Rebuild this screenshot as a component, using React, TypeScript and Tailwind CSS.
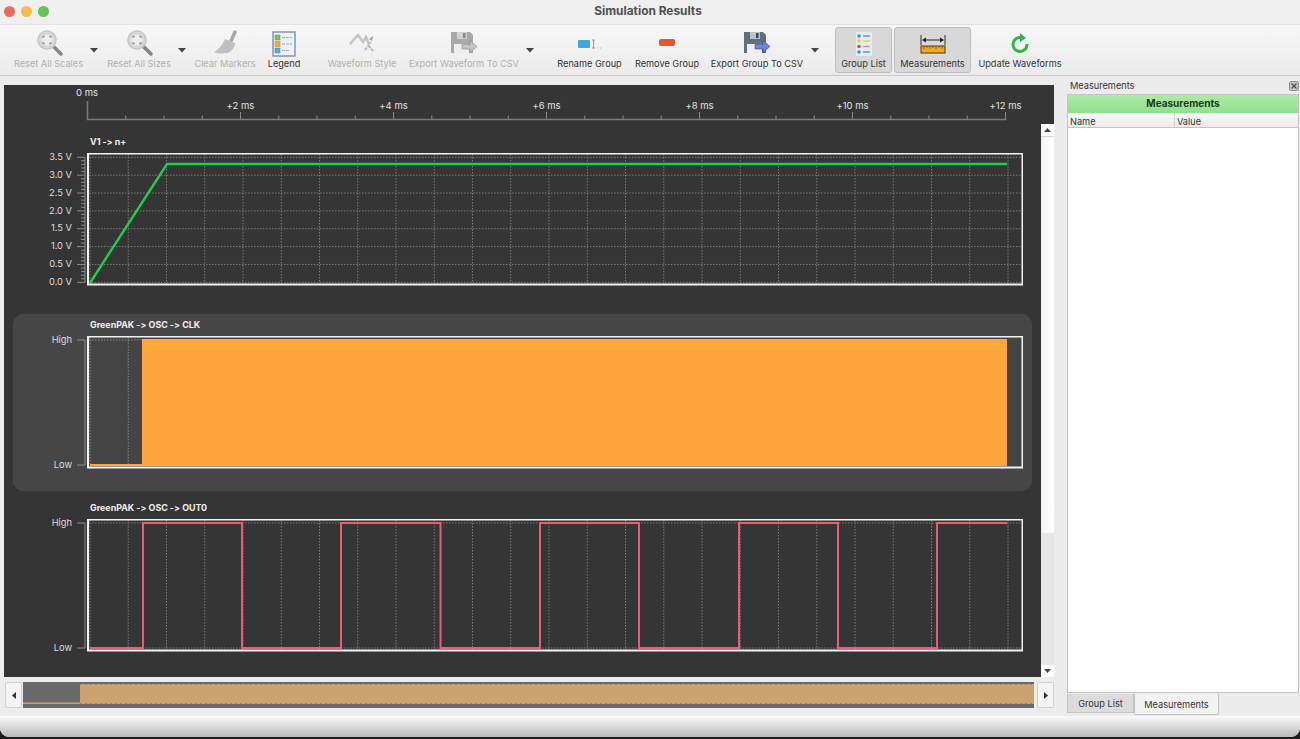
import type { ReactNode } from 'react';

const cols = Array.from({ length: 25 }, (_, i) => 90 + i * 38.25);

function Magnifier() {
  return (
    <svg width="30" height="28" viewBox="0 0 30 28">
      <line x1="20" y1="17" x2="27" y2="24" stroke="#858585" strokeWidth="3.5" strokeLinecap="round" />
      <circle cx="13" cy="10" r="9" fill="#d8d8d8" stroke="#c6c6c6" strokeWidth="1.5" />
      <circle cx="13" cy="10" r="5.5" fill="#ededed" />
      <path d="M9 8V6.5H11M15 6.5H17V8M17 12V13.5H15M11 13.5H9V12" fill="none" stroke="#a2a2a2" strokeWidth="1.5" />
    </svg>
  );
}

function Broom() {
  return (
    <svg width="30" height="28" viewBox="0 0 30 28">
      <path d="M25 2L21 11" stroke="#a9a9a9" strokeWidth="3.5" strokeLinecap="round" />
      <path d="M15 9L25 13C24 19 20 24 15 23C10 24 6 23 4 22C9 20 12 15 15 9Z" fill="#c0c0c0" />
    </svg>
  );
}

function LegendIcon() {
  return (
    <svg width="26" height="26" viewBox="0 0 26 26">
      <rect x="2" y="1" width="22" height="24" fill="#eef1f4" stroke="#8296ad" strokeWidth="1.5" />
      <rect x="4" y="4" width="5" height="5" fill="#82bd62" stroke="#5a9440" strokeWidth="0.5" />
      <rect x="4" y="10.5" width="5" height="5" fill="#f5a93c" stroke="#c9801a" strokeWidth="0.5" />
      <rect x="4" y="17" width="5" height="5" fill="#58aee2" stroke="#2e84ba" strokeWidth="0.5" />
      <path d="M11 6.5H21M11 13H21M11 19.5H18" stroke="#8c98a5" strokeWidth="0.8" strokeDasharray="3 1" />
    </svg>
  );
}

function WaveIcon() {
  return (
    <svg width="30" height="28" viewBox="0 0 30 28">
      <path d="M3 14L11 5L16 12L19 7L22 14" fill="none" stroke="#c4c4c4" strokeWidth="2.5" />
      <path d="M18 20L24 12M26 21L21 15" stroke="#bcbcbc" strokeWidth="2" strokeDasharray="3 1" />
      <path d="M22 9L26 6L25 11Z" fill="#9c9c9c" />
    </svg>
  );
}

function Floppy({ body, dark, shutter, arrow }: { body: string; dark: string; shutter: string; arrow: string }) {
  return (
    <svg width="30" height="28" viewBox="0 0 30 28">
      <path d="M2 2H21L24 5V23H2Z" fill={body} />
      <rect x="8" y="2" width="10" height="7" fill={shutter} />
      <rect x="14" y="3" width="2.5" height="5" fill={dark} />
      <rect x="5" y="14" width="15" height="9" fill="#eeeeee" />
      <path d="M13 14.5H21V10.5L28 16.5L21 22.5V19H13Z" fill={arrow} stroke={dark} strokeWidth="0.6" />
    </svg>
  );
}

function RenameIcon() {
  return (
    <svg width="30" height="28" viewBox="0 0 30 28">
      <rect x="3" y="10" width="12" height="8" rx="1" fill="#3ea7e2" />
      <path d="M17 10H20M17 18H20M18.5 10V18" stroke="#9a9a9a" strokeWidth="1" fill="none" />
      <path d="M22 18H23M25 18H26" stroke="#b5b5b5" strokeWidth="1" />
    </svg>
  );
}

function RemoveIcon() {
  return (
    <svg width="30" height="28" viewBox="0 0 30 28">
      <rect x="7" y="9" width="16" height="7" rx="2" fill="#e0582b" />
    </svg>
  );
}

function GroupListIcon() {
  return (
    <svg width="30" height="28" viewBox="0 0 30 28">
      <rect x="7" y="2" width="16" height="24" fill="#e6ecf0" />
      <circle cx="10" cy="6" r="1.8" fill="#2a9bd8" />
      <circle cx="10" cy="11" r="1.8" fill="#f4c63c" />
      <circle cx="10" cy="16.5" r="1.8" fill="#e0483c" />
      <circle cx="10" cy="22" r="1.8" fill="#2a9bd8" />
      <path d="M14 6H21" stroke="#2a9bd8" strokeWidth="1.3" />
      <path d="M14 11H21" stroke="#f4c63c" strokeWidth="1.3" />
      <path d="M14 16.5H21" stroke="#e58a80" strokeWidth="1.3" />
      <path d="M14 22H21" stroke="#2a9bd8" strokeWidth="1.3" />
    </svg>
  );
}

function RulerIcon() {
  return (
    <svg width="30" height="28" viewBox="0 0 30 28">
      <path d="M3 5V15M27 5V15" stroke="#333" strokeWidth="1" />
      <path d="M5 10H25" stroke="#222" strokeWidth="1" />
      <path d="M4 10L8 7.5V12.5ZM26 10L22 7.5V12.5Z" fill="#222" />
      <rect x="3" y="16" width="24" height="7" fill="#f2a81d" stroke="#4a3a18" strokeWidth="1" />
      <path d="M6 16V19M9 16V18M12 16V19M15 16V18M18 16V19M21 16V18M24 16V19" stroke="#6b4e10" strokeWidth="0.75" />
    </svg>
  );
}

function RefreshIcon() {
  return (
    <svg width="30" height="28" viewBox="0 0 30 28">
      <path d="M16 7.5A7 7 0 1 0 22 14" fill="none" stroke="#35b44c" strokeWidth="3" />
      <path d="M15 3L21 8L15 12Z" fill="#35b44c" />
    </svg>
  );
}

function ToolButton({ label, icon, width, disabled, checked }: { label: string; icon: ReactNode; width: string; disabled?: boolean; checked?: boolean }) {
  return (
    <div className={`${width} shrink-0 flex flex-col items-center ${checked ? 'h-[46px] mt-[2px] pt-[2px] bg-[#d8d8d8] border border-[#bdbdbd] rounded-[3px]' : 'h-[50px] pt-[5px]'}`}>
      <div className="h-[28px] flex items-center justify-center">{icon}</div>
      <span className={`whitespace-nowrap leading-[12px] text-[9.2px] ${disabled ? 'text-[#b0b0b0]' : 'text-[#333333]'}`}>{label}</span>
    </div>
  );
}

function Arrow({ width, color = '#444444' }: { width: string; color?: string }) {
  return (
    <div className={`${width} shrink-0 h-[50px] flex justify-center pt-[23px]`}>
      <svg width="8" height="5" viewBox="0 0 8 5"><path d="M0 0H8L4 4.5Z" fill={color} /></svg>
    </div>
  );
}

function Grip({ width }: { width: string }) {
  return (
    <div className={`${width} shrink-0 h-[50px] flex items-center justify-center`}>
      <div className="w-[4px] h-[15px] mt-[-2px] bg-[radial-gradient(#c2c2c2_0.6px,transparent_0.7px)] bg-[length:2px_2px]" />
    </div>
  );
}

function Toolbar() {
  return (
    <div className="h-[51px] flex border-b border-[#c9c9c9] bg-gradient-to-b from-[#f7f7f7] to-[#ebebeb]">
      <Grip width="w-[10px]" />
      <ToolButton disabled width="w-[77px]" label="Reset All Scales" icon={<Magnifier />} />
      <Arrow width="w-[14px]" />
      <ToolButton disabled width="w-[76px]" label="Reset All Sizes" icon={<Magnifier />} />
      <Arrow width="w-[10px]" />
      <ToolButton disabled width="w-[76px]" label="Clear Markers" icon={<Broom />} />
      <ToolButton width="w-[42px]" label="Legend" icon={<LegendIcon />} />
      <Grip width="w-[20px]" />
      <ToolButton disabled width="w-[74px]" label="Waveform Style" icon={<WaveIcon />} />
      <div className="w-[3px] shrink-0" />
      <ToolButton disabled width="w-[124px]" label="Export Waveform To CSV" icon={<Floppy body="#a9a9a9" dark="#8a8a8a" shutter="#d0d0d0" arrow="#c4c4c4" />} />
      <Arrow width="w-[8px]" />
      <Grip width="w-[22px]" />
      <ToolButton width="w-[67px]" label="Rename Group" icon={<RenameIcon />} />
      <ToolButton width="w-[88px]" label="Remove Group" icon={<RemoveIcon />} />
      <ToolButton width="w-[92px]" label="Export Group To CSV" icon={<Floppy body="#5c7082" dark="#3a4a58" shutter="#b8c2ca" arrow="#6f80ea" />} />
      <Arrow width="w-[24px]" />
      <Grip width="w-[8px]" />
      <ToolButton checked width="w-[57px]" label="Group List" icon={<GroupListIcon />} />
      <div className="w-[2px] shrink-0" />
      <ToolButton checked width="w-[77px]" label="Measurements" icon={<RulerIcon />} />
      <ToolButton width="w-[98px]" label="Update Waveforms" icon={<RefreshIcon />} />
    </div>
  );
}

function Ruler() {
  const labels = [2, 4, 6, 8, 10, 12];
  return (
    <svg width="1050" height="39" viewBox="4 85 1050 39" className="block shrink-0">
      <text x="87" y="96" textAnchor="middle" fontSize="9.5" fill="#e2e2e2">0 ms</text>
      {labels.map((n) => (
        <text key={n} x={87.5 + n * 76.5} y="108.5" textAnchor="middle" fontSize="9.5" fill="#e2e2e2">+{n} ms</text>
      ))}
      <path d="M87.5 101V119.5H1006.5" fill="none" stroke="#7b7b7b" strokeWidth="1.5" />
      {Array.from({ length: 24 }, (_, i) => {
        const major = (i + 1) % 4 === 0;
        const x = 87.5 + (i + 1) * 38.25;
        return <line key={i} x1={x} x2={x} y1={major ? 112 : 115.5} y2="119" stroke="#8a8a8a" strokeWidth="1" />;
      })}
    </svg>
  );
}

function Plot({ top, ticks, minor, children }: { top: number; ticks: number[]; minor?: number[]; children: ReactNode }) {
  return (
    <svg width="951" height="133" viewBox={`72 ${top} 951 133`} className="block">
      <path d={`M85 ${ticks[0]}V${ticks[ticks.length - 1]}`} stroke="#8e8e8e" strokeWidth="1" />
      {ticks.map((y) => <line key={y} x1="77" x2="85" y1={y} y2={y} stroke="#8e8e8e" strokeWidth="1" />)}
      {minor?.map((y) => <line key={y} x1="81" x2="85" y1={y} y2={y} stroke="#8e8e8e" strokeWidth="1" />)}
      {cols.map((x) => <line key={x} x1={x} x2={x} y1={top + 1} y2={top + 131} stroke="#7c7c7c" strokeWidth="1" strokeDasharray="1.5 1.5" />)}
      {ticks.map((y) => <line key={y} x1="89" x2="1022" y1={y} y2={y} stroke="#7c7c7c" strokeWidth="1" strokeDasharray="1.5 1.5" />)}
      {children}
      <rect x="88" y={top + 0.5} width="934.5" height="131" fill="none" stroke="#f2f2f2" strokeWidth="2" />
    </svg>
  );
}

function Row({ title, labels, active, children }: { title: string; labels: string[]; active?: boolean; children: ReactNode }) {
  return (
    <div className={`h-[177px] rounded-[10px] ${active ? 'bg-[#464646]' : ''}`}>
      <div className="pt-[5px] pl-[77px] mb-[5px] h-[17px] leading-[12px] text-[8.9px] font-bold text-[#f0f0f0] whitespace-nowrap">{title}</div>
      <div className="flex">
        <div className="w-[59px] shrink-0 flex flex-col justify-between items-end mt-[-2px] h-[137px] text-[9.3px] leading-[12px] text-[#dddddd]">
          {labels.map((l) => <span key={l}>{l}</span>)}
        </div>
        {children}
      </div>
    </div>
  );
}

function Scrollbar() {
  return (
    <div className="w-[13px] shrink-0 flex flex-col bg-[#e6e6e6]">
      <div className="h-[13px] flex items-center justify-center bg-white border-b border-[#d8d8d8]">
        <svg width="7" height="4" viewBox="0 0 7 4"><path d="M3.5 0L7 4H0Z" fill="#444" /></svg>
      </div>
      <div className="h-[396px] bg-gradient-to-r from-[#f4f4f4] to-white" />
      <div className="flex-1" />
      <div className="h-[12px] flex items-center justify-center bg-white">
        <svg width="7" height="4" viewBox="0 0 7 4"><path d="M0 0H7L3.5 4Z" fill="#444" /></svg>
      </div>
    </div>
  );
}

function Overview() {
  return (
    <div className="mt-[5px] h-[26px] flex gap-[1px] ml-[1px]">
      <div className="w-[17px] h-[26px] flex items-center justify-center bg-[#f4f4f4] border border-[#d0d0d0] rounded-[2px]">
        <svg width="4" height="7" viewBox="0 0 4 7"><path d="M4 0V7L0 3.5Z" fill="#333" /></svg>
      </div>
      <svg width="1011" height="26" viewBox="23 682 1011 26" className="block">
        <rect x="23" y="682" width="1011" height="26" fill="#69696b" />
        <rect x="80" y="684" width="954" height="20" fill="#cda271" />
        <rect x="23" y="702.5" width="57" height="1.5" fill="#cda271" />
        <path d="M80 684H1034M80 704H1034" stroke="#7d6a52" strokeWidth="1" strokeDasharray="2 3" />
      </svg>
      <div className="w-[17px] h-[26px] ml-[2px] flex items-center justify-center bg-[#f4f4f4] border border-[#d0d0d0] rounded-[2px]">
        <svg width="4" height="7" viewBox="0 0 4 7"><path d="M0 0V7L4 3.5Z" fill="#333" /></svg>
      </div>
    </div>
  );
}

function SidePanel() {
  return (
    <div className="w-[232px] shrink-0 flex flex-col">
      <div className="h-[18px] pt-[2px] flex items-center justify-between pl-[3px] text-[9.2px] text-[#333333]">
        <span>Measurements</span>
        <div className="w-[10px] h-[10px] bg-[#c8c8c8] border border-[#8e8e8e] rounded-[2px] flex items-center justify-center">
          <svg width="6" height="6" viewBox="0 0 6 6"><path d="M0.5 0.5L5.5 5.5M5.5 0.5L0.5 5.5" stroke="#444" strokeWidth="1.2" /></svg>
        </div>
      </div>
      <div className="h-[599px] flex flex-col bg-white border border-[#c4c4c4]">
        <div className="h-[18px] pb-[2px] flex items-center justify-center bg-gradient-to-b from-[#aeeba6] to-[#90e08c] text-[10px] font-bold text-[#1f3a1f]">Measurements</div>
        <div className="h-[15px] flex bg-gradient-to-b from-[#f8f8f8] to-[#ececec] border-b border-[#c4c4c4] text-[9.2px] leading-[17px] text-[#333333]">
          <div className="w-[107px] pl-[2px] border-r border-[#d4d4d4]">Name</div>
          <div className="pl-[2px]">Value</div>
        </div>
      </div>
      <div className="mt-[1px] flex items-start text-[9.2px] text-[#333333]">
        <div className="w-[67px] h-[19px] pt-[2px] flex items-center justify-center bg-[#dcdcdc] border border-t-0 border-[#c4c4c4]">Group List</div>
        <div className="w-[85px] h-[21px] pt-[2px] flex items-center justify-center bg-[#f2f2f2] border border-t-0 border-[#c4c4c4] rounded-b-[2px]">Measurements</div>
      </div>
    </div>
  );
}

export default function App() {
  const volts = Array.from({ length: 8 }, (_, i) => 157.3 + i * 17.86);
  const voltMinor = Array.from({ length: 36 }, (_, i) => 157.3 + i * 3.572).filter((_, i) => i % 5 !== 0);
  const edges = [143, 242, 341, 440.5, 540, 639, 739, 838, 937];
  let square = 'M90 648';
  edges.forEach((x, i) => {
    square += `H${x}V${i % 2 === 0 ? 523 : 648}`;
  });
  square += 'H1007';

  return (
    <div className="w-full h-screen overflow-hidden bg-[#1c1c1c] [font-family:Inter,sans-serif] [font-variant-ligatures:none] [font-feature-settings:'calt'_0]">
      <div className="h-[737px] flex flex-col bg-[#ececec] rounded-b-[9px] overflow-hidden">
        <div className="h-[25px] shrink-0 relative flex items-center justify-center bg-[#efefef] border-b border-[#e0e0e0]">
          <div className="absolute left-[4px] top-[6px] flex gap-[6px]">
            <div className="w-[11px] h-[11px] rounded-full bg-[#ee6a5f]" />
            <div className="w-[11px] h-[11px] rounded-full bg-[#f5bd4f]" />
            <div className="w-[11px] h-[11px] rounded-full bg-[#61c454]" />
          </div>
          <span className="text-[11.9px] font-bold text-[#505050] mb-[2px] mr-[4px]">Simulation Results</span>
        </div>
        <Toolbar />
        <div className="h-[640px] flex shrink-0 bg-[#ececec]">
          <div className="w-[1067px] shrink-0 pl-[4px] pt-[9px]">
            <div className="w-[1050px] h-[592px] flex flex-col bg-[#353535]">
              <Ruler />
              <div className="flex-1 flex">
                <div className="flex-1 pt-[7px] pl-[9px] pr-[9px] flex flex-col gap-[6px]">
                  <Row title="V1 -> n+" labels={['3.5 V', '3.0 V', '2.5 V', '2.0 V', '1.5 V', '1.0 V', '0.5 V', '0.0 V']}>
                    <Plot top={153} ticks={volts} minor={voltMinor}>
                      <path d="M90 283L167 164H1007" fill="none" stroke="#22cc4c" strokeWidth="2.4" />
                    </Plot>
                  </Row>
                  <Row active title="GreenPAK -> OSC -> CLK" labels={['High', 'Low']}>
                    <Plot top={336} ticks={[340, 465]}>
                      <rect x="89" y="337" width="933" height="130" fill="#444444" />
                      {cols.slice(0, 2).map((x) => <line key={x} x1={x} x2={x} y1="337" y2="466" stroke="#8a8a8a" strokeDasharray="1.5 1.5" />)}
                      <path d="M89 340H142" stroke="#8a8a8a" strokeDasharray="1.5 1.5" />
                      <rect x="142" y="339" width="865" height="127" fill="#ffa53e" />
                      <rect x="90" y="464" width="52" height="2" fill="#ffa53e" />
                    </Plot>
                  </Row>
                  <Row title="GreenPAK -> OSC -> OUT0" labels={['High', 'Low']}>
                    <Plot top={519} ticks={[523, 648]}>
                      <path d={square} fill="none" stroke="#ec5a74" strokeWidth="2" />
                    </Plot>
                  </Row>
                </div>
                <Scrollbar />
              </div>
            </div>
            <Overview />
          </div>
          <SidePanel />
        </div>
        <div className="flex-1 bg-gradient-to-b from-[#fbfbfb] to-[#b9b9b9]" />
      </div>
    </div>
  );
}
